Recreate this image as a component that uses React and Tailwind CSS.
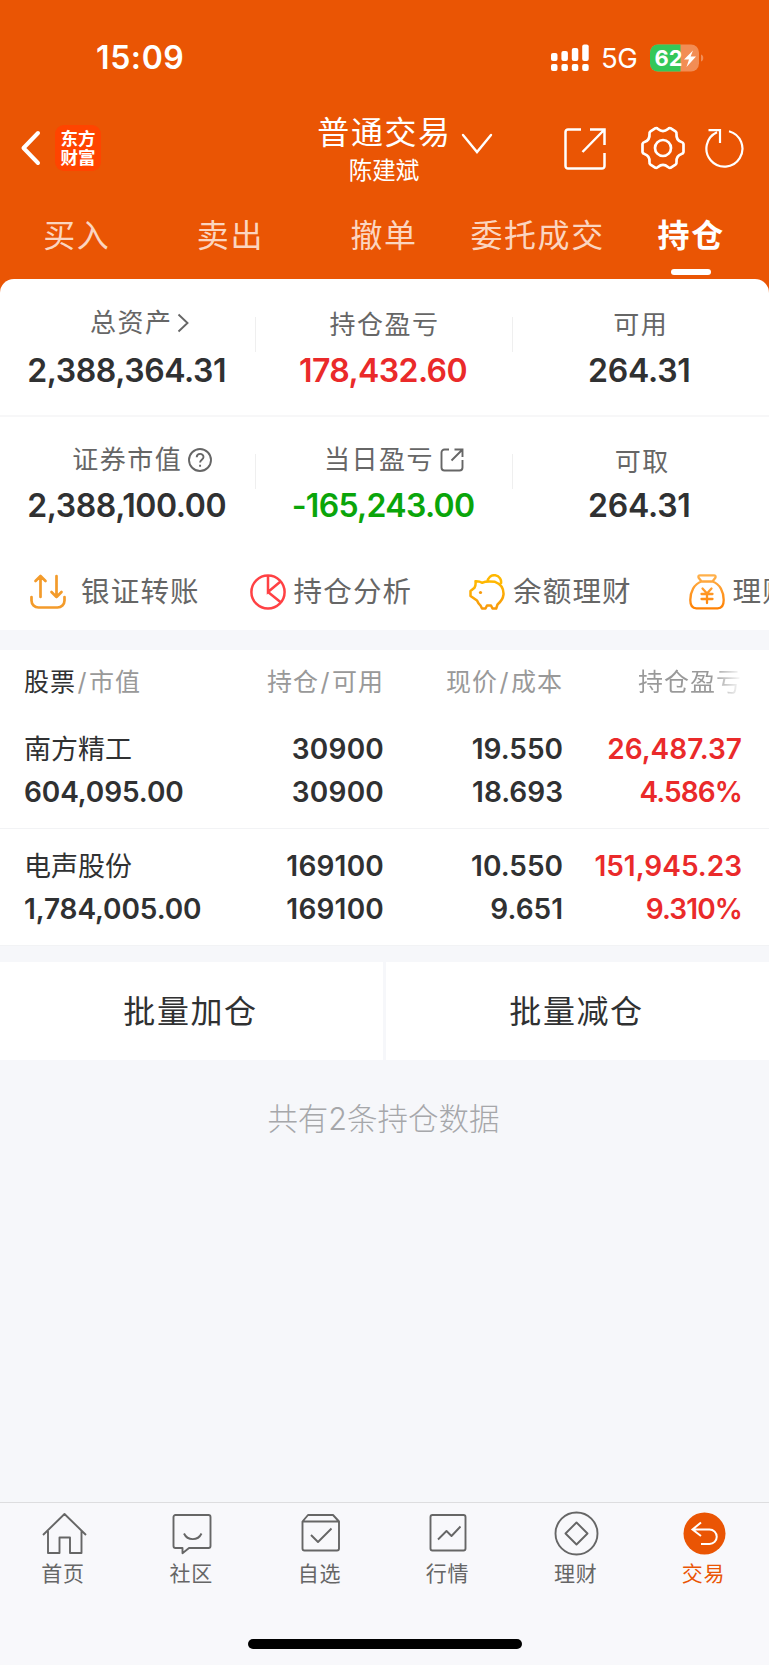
import React from "react";

const tabs = ["买入", "卖出", "撤单", "委托成交", "持仓"];

const holdings = [
  {
    name: "南方精工",
    value: "604,095.00",
    amount: "30900",
    available: "30900",
    price: "19.550",
    cost: "18.693",
    profit: "26,487.37",
    rate: "4.586%",
  },
  {
    name: "电声股份",
    value: "1,784,005.00",
    amount: "169100",
    available: "169100",
    price: "10.550",
    cost: "9.651",
    profit: "151,945.23",
    rate: "9.310%",
  },
];

const StatusBar = () => (
  <div className="h-[114px] pt-[2px] flex items-center justify-between pl-[96px] pr-[65px] text-white">
    <span className="text-[32px] leading-8 font-semibold tracking-[0.6px]">15:09</span>
    <div className="flex items-center">
      <svg width="38" height="28" viewBox="0 0 38 28" fill="white">
        <rect x="0" y="9" width="6.5" height="8" rx="2" />
        <rect x="10.4" y="7" width="6.5" height="10" rx="2" />
        <rect x="20.8" y="4" width="6.5" height="13" rx="2" />
        <rect x="31.2" y="0.5" width="6.5" height="16.5" rx="2" />
        <rect x="0" y="20" width="6.5" height="7" rx="2" />
        <rect x="10.4" y="20" width="6.5" height="7" rx="2" />
        <rect x="20.8" y="20" width="6.5" height="7" rx="2" />
        <rect x="31.2" y="20" width="6.5" height="7" rx="2" />
      </svg>
      <span className="ml-3 w-[38px] text-[27.500px] leading-8 tracking-[-0.4px]">5G</span>
      <svg className="ml-[11px]" width="54" height="28" viewBox="0 0 54 28">
        <clipPath id="battery">
          <rect x="0" y="0.5" width="49" height="27" rx="8" />
        </clipPath>
        <g clipPath="url(#battery)">
          <rect width="49" height="28" fill="#f28d55" />
          <rect width="30.5" height="28" fill="#34c759" />
        </g>
        <path d="M51 10.5c3 .8 3 6.200 0 7z" fill="#f28d55" />
        <text x="4.500" y="21.800" fontSize="22" fontWeight="700" fill="white">62</text>
        <path d="M43 6.500 34 15.500h5l-2.500 7.500 9.500-10.500h-5.400z" fill="white" />
      </svg>
    </div>
  </div>
);

const Header = () => (
  <div className="h-[78px] flex items-center text-white">
    <svg className="ml-5 mt-[-10px]" width="22" height="36" viewBox="0 0 22 36" fill="none" stroke="white" strokeWidth="4" strokeLinecap="round" strokeLinejoin="round">
      <path d="M18 3 3.500 18 18 33" />
    </svg>
    <div className="ml-[13px] mt-[-11px] w-[46px] h-[46px] rounded-[9px] bg-[#ff4400] flex flex-col items-center justify-center text-[17.500px] leading-[19px] font-bold">
      <span>东方</span>
      <span>财富</span>
    </div>
    <div className="ml-[207px] mt-[18px] w-[153px] flex flex-col items-center">
      <span className="mt-[-22px] text-[32px] leading-10 tracking-[1.600px] whitespace-nowrap">普通交易</span>
      <span className="mr-px text-[23.500px] leading-9 whitespace-nowrap">陈建斌</span>
    </div>
    <svg className="mt-[-18px]" width="32" height="22" viewBox="0 0 32 22" fill="none" stroke="white" strokeWidth="2.400" strokeLinecap="round">
      <path d="M2 2 16 19 30 2" />
    </svg>
    <svg className="ml-[71px] mt-[-9px]" width="42" height="42" viewBox="0 0 42 42" fill="none" stroke="white" strokeWidth="2.500">
      <path d="M17 1.500H4a2.500 2.500 0 0 0-2.500 2.500v34a2.500 2.500 0 0 0 2.500 2.500h34a2.500 2.500 0 0 0 2.500-2.500V25M26 1.500h14.500V17M40 2 18.500 24" />
    </svg>
    <svg className="ml-[35px] mt-[-11px]" width="44" height="44" viewBox="0 0 44 44" fill="none" stroke="white" strokeWidth="2.700" strokeLinejoin="round">
      <path d="M14.500 2.200Q16 1.800 17 3Q22 7.200 27 3Q28 1.800 29.500 2.200L34.500 5.300Q35.800 6.200 35.500 8Q35 14.200 40.500 16Q42.300 16.500 42.500 18V26Q42.300 27.500 40.500 28Q35 29.800 35.500 36Q35.800 37.800 34.500 38.700L29.500 41.800Q28 42.200 27 41Q22 36.800 17 41Q16 42.200 14.500 41.800L9.500 38.700Q8.200 37.800 8.500 36Q9 29.800 3.500 28Q1.700 27.500 1.500 26V18Q1.700 16.500 3.500 16Q9 14.200 8.500 8Q8.200 6.200 9.500 5.300Z" />
      <circle cx="22" cy="22" r="8" />
    </svg>
    <svg className="ml-5 mt-[-11px]" width="40" height="40" viewBox="0 0 40 40" fill="none" stroke="white" strokeWidth="2.200">
      <path d="M24 3.200A18 18 0 1 1 12 4.200M3.500 2.200H15V15" />
    </svg>
  </div>
);

const Tabs = () => (
  <div className="h-[87px] flex pr-px">
    {tabs.map((tab, i) => {
      const active = i === tabs.length - 1;
      return (
        <div key={tab} className="flex-1 flex flex-col items-center">
          <span
            className={`mt-[23px] text-[32px] leading-[42px] tracking-[1.600px] ${
              active ? "font-bold text-white" : "text-[#fbd5c0]"
            }`}
          >
            {tab}
          </span>
          {active && <div className="mt-[12px] w-10 h-1.5 rounded-full bg-white" />}
        </div>
      );
    })}
  </div>
);

const Stat = ({ label, icon, value, valueClass, labelClass, divider }) => (
  <div className="flex-1 flex flex-col items-center relative">
    <div className={`h-[36px] flex items-center text-[26px] text-[#666] tracking-[1.500px] ${labelClass}`}>
      <span className="leading-9">{label}</span>
      {icon}
    </div>
    <span className={`pr-[3px] text-[32px] leading-10 font-semibold ${valueClass}`}>{value}</span>
    {divider && <div className={`absolute right-0 w-px h-[35px] bg-[#efefef] ${divider}`} />}
  </div>
);

const Assets = () => (
  <div className="bg-white rounded-t-[14px]">
    <div className="flex h-[136px]">
      <Stat
        label="总资产"
        labelClass="mt-[26px] pl-[23px]"
        value="2,388,364.31"
        valueClass="mt-[10px] tracking-[-0.400px] text-[#303132]"
        divider="top-[38px]"
        icon={
          <svg className="ml-[5px]" width="12" height="20" viewBox="0 0 12 20" fill="none" stroke="#666" strokeWidth="1.900">
            <path d="M1.500 1.500 10.500 10 1.500 18.500" />
          </svg>
        }
      />
      <Stat
        label="持仓盈亏"
        labelClass="mt-[28px]"
        value="178,432.60"
        valueClass="mt-[8px] tracking-[-0.600px] text-[#ea2a2a]"
        divider="top-[38px]"
      />
      <Stat
        label="可用"
        labelClass="mt-[28px]"
        value="264.31"
        valueClass="mt-[8px] tracking-[-0.200px] text-[#303132]"
      />
    </div>
    <div className="h-0.5 bg-[#f7f7f8]" />
    <div className="flex h-[135px]">
      <Stat
        label="证券市值"
        labelClass="mt-[25px] pl-[28px]"
        value="2,388,100.00"
        valueClass="mt-[8px] tracking-[-0.400px] text-[#303132]"
        divider="top-[37px]"
        icon={
          <svg className="ml-[6px]" width="24" height="24" viewBox="0 0 24 24" fill="none" stroke="#666" strokeWidth="1.900">
            <circle cx="12" cy="12" r="11" />
            <path d="M8.700 9.300c0-4.500 6.800-4.500 6.800-.3 0 2.600-3.400 2.900-3.400 5.500M12.100 16.700v2.100" />
          </svg>
        }
      />
      <Stat
        label="当日盈亏"
        labelClass="mt-[25px] pl-[19px]"
        value="-165,243.00"
        valueClass="mt-[8px] tracking-[-0.700px] text-[#0aa50a]"
        divider="top-[37px]"
        icon={
          <svg className="ml-[6px]" width="24" height="24" viewBox="0 0 24 24" fill="none" stroke="#666" strokeWidth="1.900">
            <path d="M9 1.500H4.500a3 3 0 0 0-3 3v15a3 3 0 0 0 3 3h15a3 3 0 0 0 3-3V12M14.500 1.500h8V9M22 2 11.500 12.500" />
          </svg>
        }
      />
      <Stat
        label="可取"
        labelClass="mt-[27px] pl-[3px]"
        value="264.31"
        valueClass="mt-[6px] tracking-[-0.200px] text-[#303132]"
      />
    </div>
  </div>
);

const TransferIcon = () => (
  <svg width="36" height="36" viewBox="0 0 36 36" fill="none" stroke="#f39b2b" strokeWidth="2.700" strokeLinecap="round" strokeLinejoin="round">
    <path d="M10.500 23V2M5.500 7l5-5 5 5M26.500 2v21M21.500 18l5 5 5-5M1.500 23v3.500a7 7 0 0 0 7 7h19a7 7 0 0 0 7-7V23" />
  </svg>
);

const PieIcon = () => (
  <svg width="36" height="36" viewBox="0 0 36 36" fill="none" stroke="#ff4144" strokeWidth="2.500">
    <circle cx="18" cy="18" r="16.600" />
    <path d="M18 1.500V18L30.500 7.500M18 18l13 10.500" />
  </svg>
);

const PiggyIcon = () => (
  <svg width="36" height="36" viewBox="0 0 36 36" fill="none" strokeWidth="2.500" strokeLinejoin="round">
    <defs>
      <linearGradient id="gold" x1="0" y1="0" x2="0" y2="1">
        <stop offset="0" stopColor="#ffb800" />
        <stop offset="1" stopColor="#f79a0c" />
      </linearGradient>
    </defs>
    <path
      stroke="url(#gold)"
      d="M6.500 7.200Q10.500 7 13 8.800C16 7.300 21 7.200 26 7.800C32 10 34.800 15 34.500 20.500C34 25 31.500 28 28.500 30.500L27.200 34.500H23.500L22 31.500H18L16.500 34.500H13L11.500 31.500Q9.500 30 8 26.500L1.500 22V17L5.500 13.800Q7 11.500 6.500 7.200Z"
    />
    <path stroke="#ffb800" d="M18.500 8a6.800 6.800 0 1 1 13.300 2" />
    <circle cx="11.500" cy="18.500" r="1.600" fill="#f79a0c" />
  </svg>
);

const MoneyBagIcon = () => (
  <svg width="36" height="36" viewBox="0 0 36 36" fill="none" stroke="url(#bag)" strokeWidth="2.300" strokeLinejoin="round" strokeLinecap="round">
    <defs>
      <linearGradient id="bag" gradientUnits="userSpaceOnUse" x1="0" y1="0" x2="0" y2="36">
        <stop offset="0" stopColor="#ffb24d" />
        <stop offset="1" stopColor="#ff7f00" />
      </linearGradient>
    </defs>
    <path d="M12.500 7.500C5 10 1.300 18 1.300 26c0 5 2 8.300 6 8.300h21.400c4 0 6-3.300 6-8.300 0-8-3.700-16-11.200-18.500M12.500 7.500h11M12.500 7.500 9.500 3.500Q9 1.300 11 1.300H25Q27 1.300 26.500 3.500L23.500 7.500" />
    <path d="M13.500 14.500 18 19.500l4.500-5M18 19.500V29M12.500 20h11M12.500 25h11" />
  </svg>
);

const actions = [
  { label: "银证转账", Icon: TransferIcon, gap: "gap-[15px]" },
  { label: "持仓分析", Icon: PieIcon, gap: "gap-[8px]" },
  { label: "余额理财", Icon: PiggyIcon, gap: "gap-[8px]" },
  { label: "理财", Icon: MoneyBagIcon, gap: "gap-[8px]" },
];

const QuickActions = () => (
  <div className="h-[78px] bg-white flex pl-[30px] pt-[2px] overflow-hidden">
    {actions.map(({ label, Icon, gap }) => (
      <div key={label} className={`w-[219.500px] h-[76px] shrink-0 flex items-center whitespace-nowrap ${gap}`}>
        <Icon />
        <span className="text-[28.500px] leading-9 tracking-[1.200px] text-[#666]">{label}</span>
      </div>
    ))}
  </div>
);

const columns = "grid grid-cols-[200px_160px_179px_179px] px-6";

const Holdings = () => (
  <div className="bg-white">
    <div className={`${columns} h-[62px] pt-[4px] items-center text-[25px] tracking-[1px] text-[#999] whitespace-nowrap`}>
      <div>
        <span className="text-[#303132]">股票</span>
        <span className="mx-[1.500px]">/</span>市值
      </div>
      <div className="text-right">
        持仓<span className="mx-[1.500px]">/</span>可用
      </div>
      <div className="text-right">
        现价<span className="mx-[1.500px]">/</span>成本
      </div>
      <div className="justify-self-end bg-gradient-to-r from-[#999] from-70% to-white bg-clip-text text-transparent">
        持仓盈亏
      </div>
    </div>
    {holdings.map((item) => (
      <div
        key={item.name}
        className={`${columns} h-[117px] pt-[16px] border-b border-[#f2f3f5] text-[28px] leading-[43px] font-semibold text-[#303132] text-right auto-rows-[43px]`}
      >
        <div className="text-left text-[27px] font-normal">{item.name}</div>
        <div className="tracking-[0.200px]">{item.amount}</div>
        <div>{item.price}</div>
        <div className="text-[#ea2a2a]">{item.profit}</div>
        <div className="text-left tracking-[-0.100px]">{item.value}</div>
        <div className="tracking-[0.200px]">{item.available}</div>
        <div>{item.cost}</div>
        <div className="text-[#ea2a2a] tracking-[-0.900px]">{item.rate}</div>
      </div>
    ))}
  </div>
);

const navItems = [
  {
    label: "首页",
    icon: <path d="M1 23 22.500 2 44 23M6 19v22h11.500V25.500h10.500V41H39.500V19" />,
  },
  {
    label: "社区",
    icon: <path d="M5.500 3h33a2 2 0 0 1 2 2v29a2 2 0 0 1-2 2H19l-6.500 5.200V36h-7a2 2 0 0 1-2-2V5a2 2 0 0 1 2-2zM14 21.500c3.500 7.500 14 7.500 17.500 0" />,
  },
  {
    label: "自选",
    icon: <path d="M4.500 9.500 10 3h25l6 6.500V36.500a2 2 0 0 1-2 2H6.500a2 2 0 0 1-2-2zM4.500 9.500H41M13 23l7 7 13.500-13.500" />,
  },
  {
    label: "行情",
    icon: <path d="M6.500 3h31a2 2 0 0 1 2 2v31.500a2 2 0 0 1-2 2h-31a2 2 0 0 1-2-2V5a2 2 0 0 1 2-2zM12 27.500l8.500-8.500 5 5 9-9.500" />,
  },
  {
    label: "理财",
    icon: <path d="M22.500 0.500a21 21 0 1 1 0 42 21 21 0 0 1 0-42zM22.500 10.500l11 11-11 11-11-11z" />,
  },
];

const BottomNav = () => (
  <div className="h-[163px] bg-[#f8f8fb] border-t border-[#dddddf] flex flex-col items-center justify-between">
    <div className="w-full flex pt-[8px]">
      {navItems.map(({ label, icon }) => (
        <div key={label} className="flex-1 flex flex-col items-center text-[#666]">
          <svg width="45" height="45" viewBox="0 -1 45 45" fill="none" stroke="currentColor" strokeWidth="1.900" strokeLinejoin="round">
            {icon}
          </svg>
          <span className="mt-1 mr-[2px] text-[21px] leading-7 tracking-[0.800px]">{label}</span>
        </div>
      ))}
      <div className="flex-1 flex flex-col items-center text-[#ea5504]">
        <svg width="45" height="45" viewBox="0 -1 45 45" fill="none" stroke="white" strokeWidth="2">
          <circle cx="22.500" cy="21.500" r="21" fill="#ea5504" stroke="none" />
          <path d="M19 10.500 10.500 17.500 19 24M11 17.500H27.500a7.200 7.200 0 0 1 0 14.500H19" />
        </svg>
        <span className="mt-1 mr-[3px] text-[21px] leading-7 tracking-[0.800px]">交易</span>
      </div>
    </div>
    <div className="mb-4 w-[274px] h-[10px] rounded-full bg-black" />
  </div>
);

const App = () => {
  return (
    <div className="w-[769px] h-[1665px] flex flex-col overflow-hidden bg-[#f6f7fa] font-['Inter','Noto_Sans_CJK_SC',sans-serif]">
      <div className="bg-[#ea5504]">
        <StatusBar />
        <Header />
        <Tabs />
        <Assets />
      </div>
      <QuickActions />
      <div className="h-[20px]" />
      <Holdings />
      <div className="mt-4 h-[98px] flex gap-[3px] text-[32px] tracking-[1.600px] text-[#303132]">
        <button className="flex-1 pt-[2px] pr-[2px] bg-white">批量加仓</button>
        <button className="flex-1 pt-[2px] pr-[2px] bg-white">批量减仓</button>
      </div>
      <div className="mt-[37px] pr-[2px] flex-1 text-center text-[30.500px] leading-[44px] font-light text-[#a6a7aa]">
        共有2条持仓数据
      </div>
      <BottomNav />
    </div>
  );
};

export default App;
